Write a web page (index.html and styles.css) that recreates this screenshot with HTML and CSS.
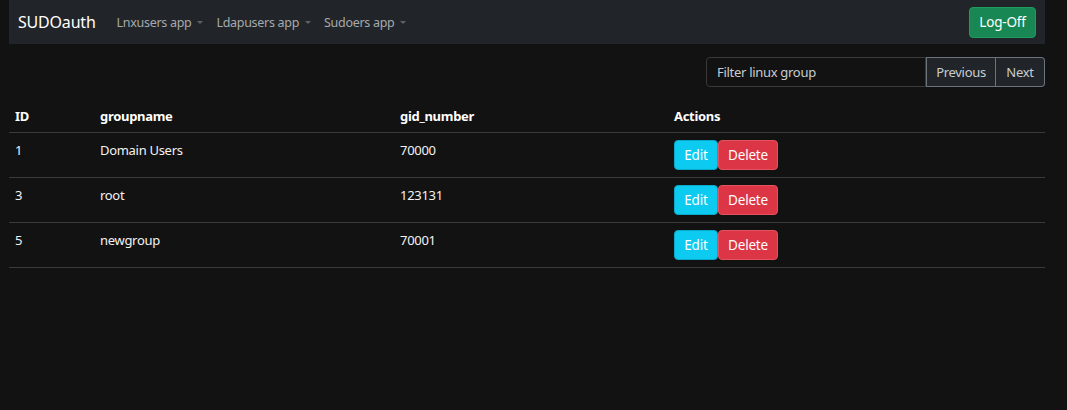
FILE: index.html
```html
<!DOCTYPE html>
<html lang="en">
<head>
<meta charset="utf-8">
<title>SUDOauth</title>
<link rel="stylesheet" href="styles.css">
</head>
<body>
<div class="page">
  <nav class="navbar">
    <div class="nav-left">
      <a class="brand" href="#">SUDOauth</a>
      <a class="nav-link" href="#">Lnxusers app <span class="caret"></span></a>
      <a class="nav-link" href="#">Ldapusers app <span class="caret"></span></a>
      <a class="nav-link" href="#">Sudoers app <span class="caret"></span></a>
    </div>
    <button class="btn btn-logoff">Log-Off</button>
  </nav>

  <div class="toolbar">
    <div class="input-group">
      <input class="filter" type="text" placeholder="Filter linux group">
      <button class="pg pg-prev">Previous</button>
      <button class="pg pg-next">Next</button>
    </div>
  </div>

  <table class="grid">
    <thead>
      <tr>
        <th class="c-id">ID</th>
        <th class="c-name">groupname</th>
        <th class="c-gid">gid_number</th>
        <th class="c-act">Actions</th>
      </tr>
    </thead>
    <tbody>
      <tr>
        <td>1</td><td>Domain Users</td><td>70000</td>
        <td><div class="actions"><button class="btn btn-edit">Edit</button><button class="btn btn-del">Delete</button></div></td>
      </tr>
      <tr>
        <td>3</td><td>root</td><td>123131</td>
        <td><div class="actions"><button class="btn btn-edit">Edit</button><button class="btn btn-del">Delete</button></div></td>
      </tr>
      <tr>
        <td>5</td><td>newgroup</td><td>70001</td>
        <td><div class="actions"><button class="btn btn-edit">Edit</button><button class="btn btn-del">Delete</button></div></td>
      </tr>
    </tbody>
  </table>
</div>
</body>
</html>
```

FILE: styles.css
```css
* { box-sizing: border-box; }
html, body { margin: 0; padding: 0; }
body {
  background: #121212;
  color: #f2f2f2;
  font-family: "Noto Sans", "Open Sans", sans-serif;
  font-size: 13px;
  letter-spacing: -0.3px;
}
.page {
  width: 1036px;
  margin-left: 9px;
}
.navbar {
  height: 44px;
  background: #212529;
  display: flex;
  align-items: center;
  justify-content: space-between;
  padding: 0 9px;
}
.nav-left {
  display: flex;
  align-items: center;
}
.brand {
  color: #ffffff;
  font-size: 16px;
  letter-spacing: -0.2px;
  text-decoration: none;
  margin-right: 21px;
}
.nav-link {
  color: #a7a9ac;
  font-size: 12.5px;
  letter-spacing: -0.3px;
  text-decoration: none;
  margin-right: 13px;
  display: flex;
  align-items: center;
}
.caret {
  display: inline-block;
  width: 0;
  height: 0;
  margin-left: 6px;
  border-left: 3px solid transparent;
  border-right: 3px solid transparent;
  border-top: 3px solid #5e6266;
}
.btn {
  font-family: inherit;
  font-size: 13.5px;
  letter-spacing: -0.2px;
  color: #fff;
  border: 1px solid transparent;
  border-radius: 4px;
  cursor: pointer;
  line-height: 20px;
}
.btn-logoff {
  background: #198754;
  border-color: #1f9a61;
  height: 31px;
  width: 67px;
  padding: 0;
}
.toolbar {
  display: flex;
  justify-content: flex-end;
  margin-top: 13px;
}
.input-group {
  display: flex;
  height: 30px;
}
.filter {
  width: 220px;
  height: 30px;
  background: #121212;
  border: 1px solid #3a3a3a;
  border-radius: 4px 0 0 4px;
  color: #ddd;
  font-family: inherit;
  font-size: 13px;
  letter-spacing: -0.3px;
  padding: 0 10px;
  outline: none;
}
.filter::placeholder { color: #c9ccd0; }
.pg {
  height: 30px;
  background: #212529;
  border: 1px solid #6c757d;
  color: #c9cdd1;
  font-family: inherit;
  font-size: 13px;
  letter-spacing: -0.3px;
  padding: 0;
}
.pg-prev { border-radius: 0; width: 70px; }
.pg-next { border-left: none; border-radius: 0 4px 4px 0; width: 49px; }
.grid {
  width: 1036px;
  border-collapse: collapse;
  margin-top: 13px;
}
.grid th, .grid td {
  text-align: left;
  vertical-align: top;
  padding: 7px 6px 7px;
  line-height: 20px;
  border-bottom: 1px solid #3a3a3a;
}
.grid th { font-weight: 700; color: #fff; padding-top: 6px; padding-bottom: 6px; }
.c-id { width: 85px; }
.c-name { width: 300px; }
.c-gid { width: 274px; }
.actions {
  display: flex;
  align-items: flex-start;
}
.btn-edit {
  background: #0dcaf0;
  border-color: #0aa8c8;
  height: 30px;
  width: 44px;
  padding: 0;
}
.btn-del {
  background: #dc3545;
  border-color: #e4525f;
  height: 30px;
  width: 60px;
  padding: 0;
}
```
